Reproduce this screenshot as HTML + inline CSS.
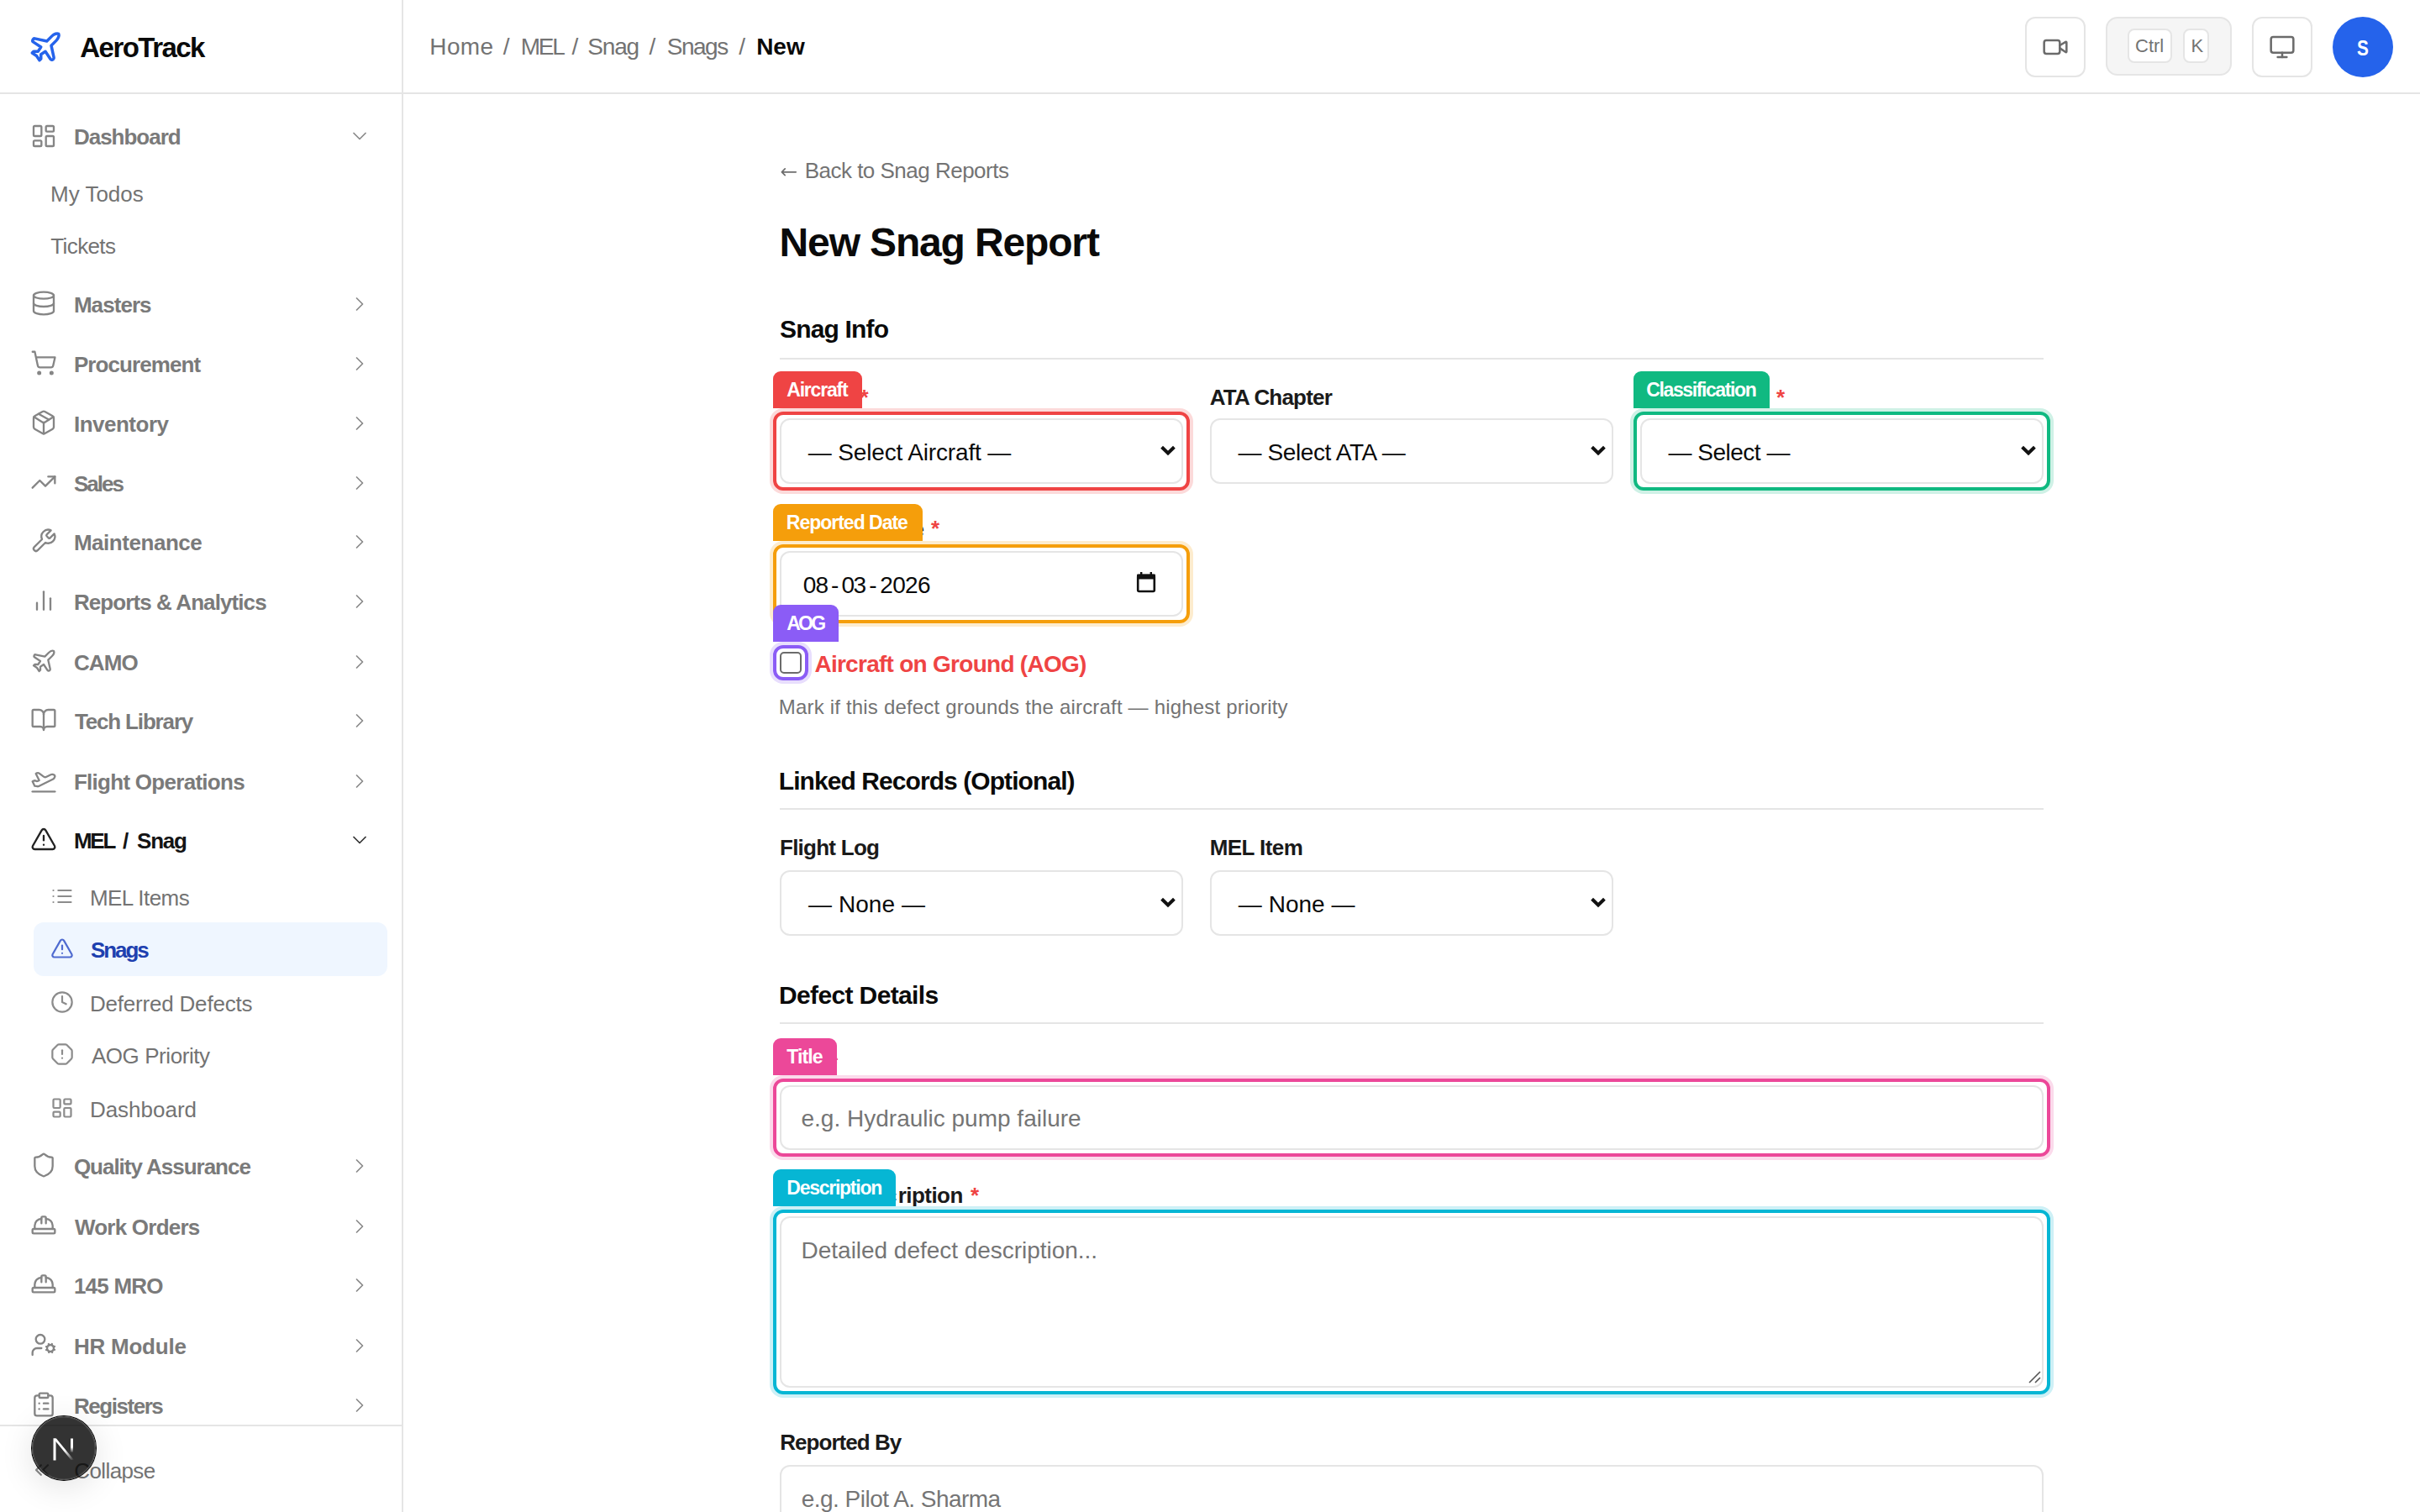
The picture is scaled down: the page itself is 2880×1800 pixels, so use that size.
<!DOCTYPE html>
<html><head><meta charset="utf-8"><title>AeroTrack</title>
<style>
html,body{margin:0;padding:0;}
body{width:2880px;height:1800px;position:relative;overflow:hidden;background:#fff;font-family:"Liberation Sans",sans-serif;}
.t{position:absolute;white-space:pre;}
.b{position:absolute;}
.ic{position:absolute;overflow:visible;}
@media (max-width: 2000px) { body{zoom:0.5;} }
</style></head><body>

<div class="b" style="left:0px;top:110px;width:2880px;height:2px;background:#e5e5e5"></div>
<div class="b" style="left:478px;top:0px;width:2px;height:1800px;background:#e5e5e5"></div>
<svg class="ic" style="left:33px;top:35px;width:42px;height:42px" viewBox="0 0 24 24" fill="none" stroke="#2563eb" stroke-width="2" stroke-linecap="round" stroke-linejoin="round"><path d="M17.8 19.2 16 11l3.5-3.5C21 6 21.5 4 21 3c-1-.5-3 0-4.5 1.5L13 8 4.8 6.2c-.5-.1-.9.1-1.1.5l-.3.5c-.2.5-.1 1 .3 1.3L9 12l-2 3H4l-1 1 3 2 2 3 1-1v-3l3-2 3.5 5.3c.3.4.8.5 1.3.3l.5-.2c.4-.3.6-.7.5-1.2z"/></svg>
<div class="t" style="left:95.30px;top:40px;font-size:33px;line-height:33px;font-weight:700;letter-spacing:-1.538px;color:#0a0a0a;">AeroTrack</div>
<div class="t" style="left:511.30px;top:42px;font-size:28px;line-height:28px;letter-spacing:0.367px;color:#737373;">Home</div>
<div class="t" style="left:598.80px;top:42px;font-size:28px;line-height:28px;color:#737373;">/</div>
<div class="t" style="left:619.80px;top:42px;font-size:28px;line-height:28px;letter-spacing:-2.250px;color:#737373;">MEL</div>
<div class="t" style="left:680.50px;top:42px;font-size:28px;line-height:28px;color:#737373;">/</div>
<div class="t" style="left:699.20px;top:42px;font-size:28px;line-height:28px;letter-spacing:-1.133px;color:#737373;">Snag</div>
<div class="t" style="left:772.60px;top:42px;font-size:28px;line-height:28px;color:#737373;">/</div>
<div class="t" style="left:793.80px;top:42px;font-size:28px;line-height:28px;letter-spacing:-1.500px;color:#737373;">Snags</div>
<div class="t" style="left:879.20px;top:42px;font-size:28px;line-height:28px;color:#737373;">/</div>
<div class="t" style="left:900.20px;top:42px;font-size:28px;line-height:28px;font-weight:700;letter-spacing:-0.050px;color:#0a0a0a;">New</div>
<div class="b" style="left:2410px;top:20px;width:72px;height:72px;border:2px solid #e5e5e5;border-radius:12px;box-sizing:border-box;background:#fff"></div>
<svg class="ic" style="left:2430px;top:40px;width:32px;height:32px" viewBox="0 0 24 24" fill="none" stroke="#6b6b6b" stroke-width="1.9" stroke-linecap="round" stroke-linejoin="round"><path d="m16 13 5.223 3.482a.5.5 0 0 0 .777-.416V7.87a.5.5 0 0 0-.752-.432L16 10.5"/><rect x="2" y="6" width="14" height="12" rx="2"/></svg>
<div class="b" style="left:2506px;top:20px;width:150px;height:70px;border:2px solid #e5e5e5;border-radius:14px;box-sizing:border-box;background:#f5f5f5"></div>
<div class="b" style="left:2532px;top:34px;width:53px;height:41px;border:2px solid #e5e5e5;border-radius:8px;box-sizing:border-box;background:#fff"></div>
<div class="b" style="left:2598px;top:34px;width:31px;height:41px;border:2px solid #e5e5e5;border-radius:8px;box-sizing:border-box;background:#fff"></div>
<div class="t" style="left:2541.00px;top:44px;font-size:22px;line-height:22px;color:#737373;">Ctrl</div>
<div class="t" style="left:2607.40px;top:44px;font-size:22px;line-height:22px;color:#737373;">K</div>
<div class="b" style="left:2680px;top:20px;width:72px;height:72px;border:2px solid #e5e5e5;border-radius:12px;box-sizing:border-box;background:#fff"></div>
<svg class="ic" style="left:2700px;top:40px;width:32px;height:32px" viewBox="0 0 24 24" fill="none" stroke="#6b6b6b" stroke-width="1.9" stroke-linecap="round" stroke-linejoin="round"><rect width="20" height="14" x="2" y="3" rx="2"/><line x1="8" x2="16" y1="21" y2="21"/><line x1="12" x2="12" y1="17" y2="21"/></svg>
<div class="b" style="left:2776px;top:20px;width:72px;height:72px;border-radius:50%;background:#2563eb"></div>
<div class="t" style="left:2805.20px;top:44px;font-size:26px;line-height:26px;font-weight:700;color:#fff;transform:scaleX(0.8);transform-origin:0 0;">S</div>
<svg class="ic" style="left:36px;top:146px;width:32px;height:32px" viewBox="0 0 24 24" fill="none" stroke="#858585" stroke-width="1.75" stroke-linecap="round" stroke-linejoin="round"><rect width="7" height="9" x="3" y="3" rx="1"/><rect width="7" height="5" x="14" y="3" rx="1"/><rect width="7" height="9" x="14" y="12" rx="1"/><rect width="7" height="5" x="3" y="16" rx="1"/></svg>
<div class="t" style="left:87.90px;top:150px;font-size:26px;line-height:26px;font-weight:700;letter-spacing:-1.000px;color:#7a7a7a;">Dashboard</div>
<svg class="ic" style="left:414px;top:148px;width:28px;height:28px" viewBox="0 0 24 24" fill="none" stroke="#8a8a8a" stroke-width="1.5" stroke-linecap="round" stroke-linejoin="round"><path d="m6 9 6 6 6-6"/></svg>
<svg class="ic" style="left:36px;top:344.5px;width:32px;height:32px" viewBox="0 0 24 24" fill="none" stroke="#858585" stroke-width="1.75" stroke-linecap="round" stroke-linejoin="round"><ellipse cx="12" cy="5" rx="9" ry="3"/><path d="M3 5V19A9 3 0 0 0 21 19V5"/><path d="M3 12A9 3 0 0 0 21 12"/></svg>
<div class="t" style="left:87.90px;top:350px;font-size:26px;line-height:26px;font-weight:700;letter-spacing:-0.933px;color:#7a7a7a;">Masters</div>
<svg class="ic" style="left:414px;top:348px;width:28px;height:28px" viewBox="0 0 24 24" fill="none" stroke="#8a8a8a" stroke-width="1.5" stroke-linecap="round" stroke-linejoin="round"><path d="m9 18 6-6-6-6"/></svg>
<svg class="ic" style="left:36px;top:415.5px;width:32px;height:32px" viewBox="0 0 24 24" fill="none" stroke="#858585" stroke-width="1.75" stroke-linecap="round" stroke-linejoin="round"><circle cx="8" cy="21" r="1"/><circle cx="19" cy="21" r="1"/><path d="M2.05 2.05h2l2.66 12.42a2 2 0 0 0 2 1.58h9.78a2 2 0 0 0 1.95-1.57l1.65-7.43H5.12"/></svg>
<div class="t" style="left:87.90px;top:421px;font-size:26px;line-height:26px;font-weight:700;letter-spacing:-0.920px;color:#7a7a7a;">Procurement</div>
<svg class="ic" style="left:414px;top:419px;width:28px;height:28px" viewBox="0 0 24 24" fill="none" stroke="#8a8a8a" stroke-width="1.5" stroke-linecap="round" stroke-linejoin="round"><path d="m9 18 6-6-6-6"/></svg>
<svg class="ic" style="left:36px;top:486.5px;width:32px;height:32px" viewBox="0 0 24 24" fill="none" stroke="#858585" stroke-width="1.75" stroke-linecap="round" stroke-linejoin="round"><path d="M11 21.73a2 2 0 0 0 2 0l7-4A2 2 0 0 0 21 16V8a2 2 0 0 0-1-1.73l-7-4a2 2 0 0 0-2 0l-7 4A2 2 0 0 0 3 8v8a2 2 0 0 0 1 1.73z"/><path d="M12 22V12"/><path d="m3.3 7 7.703 4.734a2 2 0 0 0 1.994 0L20.7 7"/><path d="m7.5 4.27 9 5.15"/></svg>
<div class="t" style="left:87.90px;top:492px;font-size:26px;line-height:26px;font-weight:700;letter-spacing:-0.488px;color:#7a7a7a;">Inventory</div>
<svg class="ic" style="left:414px;top:490px;width:28px;height:28px" viewBox="0 0 24 24" fill="none" stroke="#8a8a8a" stroke-width="1.5" stroke-linecap="round" stroke-linejoin="round"><path d="m9 18 6-6-6-6"/></svg>
<svg class="ic" style="left:36px;top:557.5px;width:32px;height:32px" viewBox="0 0 24 24" fill="none" stroke="#858585" stroke-width="1.75" stroke-linecap="round" stroke-linejoin="round"><polyline points="22 7 13.5 15.5 8.5 10.5 2 17"/><polyline points="16 7 22 7 22 13"/></svg>
<div class="t" style="left:87.90px;top:563px;font-size:26px;line-height:26px;font-weight:700;letter-spacing:-1.975px;color:#7a7a7a;">Sales</div>
<svg class="ic" style="left:414px;top:561px;width:28px;height:28px" viewBox="0 0 24 24" fill="none" stroke="#8a8a8a" stroke-width="1.5" stroke-linecap="round" stroke-linejoin="round"><path d="m9 18 6-6-6-6"/></svg>
<svg class="ic" style="left:36px;top:627.5px;width:32px;height:32px" viewBox="0 0 24 24" fill="none" stroke="#858585" stroke-width="1.75" stroke-linecap="round" stroke-linejoin="round"><path d="M14.7 6.3a1 1 0 0 0 0 1.4l1.6 1.6a1 1 0 0 0 1.4 0l3.77-3.77a6 6 0 0 1-7.94 7.94l-6.91 6.91a2.12 2.12 0 0 1-3-3l6.91-6.91a6 6 0 0 1 7.94-7.94l-3.76 3.76z"/></svg>
<div class="t" style="left:87.90px;top:633px;font-size:26px;line-height:26px;font-weight:700;letter-spacing:-0.460px;color:#7a7a7a;">Maintenance</div>
<svg class="ic" style="left:414px;top:631px;width:28px;height:28px" viewBox="0 0 24 24" fill="none" stroke="#8a8a8a" stroke-width="1.5" stroke-linecap="round" stroke-linejoin="round"><path d="m9 18 6-6-6-6"/></svg>
<svg class="ic" style="left:36px;top:698.5px;width:32px;height:32px" viewBox="0 0 24 24" fill="none" stroke="#858585" stroke-width="1.75" stroke-linecap="round" stroke-linejoin="round"><line x1="18" x2="18" y1="20" y2="10"/><line x1="12" x2="12" y1="20" y2="4"/><line x1="6" x2="6" y1="20" y2="14"/></svg>
<div class="t" style="left:87.90px;top:704px;font-size:26px;line-height:26px;font-weight:700;letter-spacing:-0.911px;color:#7a7a7a;">Reports &amp; Analytics</div>
<svg class="ic" style="left:414px;top:702px;width:28px;height:28px" viewBox="0 0 24 24" fill="none" stroke="#8a8a8a" stroke-width="1.5" stroke-linecap="round" stroke-linejoin="round"><path d="m9 18 6-6-6-6"/></svg>
<svg class="ic" style="left:36px;top:770.5px;width:32px;height:32px" viewBox="0 0 24 24" fill="none" stroke="#858585" stroke-width="1.75" stroke-linecap="round" stroke-linejoin="round"><path d="M17.8 19.2 16 11l3.5-3.5C21 6 21.5 4 21 3c-1-.5-3 0-4.5 1.5L13 8 4.8 6.2c-.5-.1-.9.1-1.1.5l-.3.5c-.2.5-.1 1 .3 1.3L9 12l-2 3H4l-1 1 3 2 2 3 1-1v-3l3-2 3.5 5.3c.3.4.8.5 1.3.3l.5-.2c.4-.3.6-.7.5-1.2z"/></svg>
<div class="t" style="left:87.90px;top:776px;font-size:26px;line-height:26px;font-weight:700;letter-spacing:-0.833px;color:#7a7a7a;">CAMO</div>
<svg class="ic" style="left:414px;top:774px;width:28px;height:28px" viewBox="0 0 24 24" fill="none" stroke="#8a8a8a" stroke-width="1.5" stroke-linecap="round" stroke-linejoin="round"><path d="m9 18 6-6-6-6"/></svg>
<svg class="ic" style="left:36px;top:840.5px;width:32px;height:32px" viewBox="0 0 24 24" fill="none" stroke="#858585" stroke-width="1.75" stroke-linecap="round" stroke-linejoin="round"><path d="M12 7v14"/><path d="M3 18a1 1 0 0 1-1-1V4a1 1 0 0 1 1-1h5a4 4 0 0 1 4 4 4 4 0 0 1 4-4h5a1 1 0 0 1 1 1v13a1 1 0 0 1-1 1h-6a3 3 0 0 0-3 3 3 3 0 0 0-3-3z"/></svg>
<div class="t" style="left:88.90px;top:846px;font-size:26px;line-height:26px;font-weight:700;letter-spacing:-1.155px;color:#7a7a7a;">Tech Library</div>
<svg class="ic" style="left:414px;top:844px;width:28px;height:28px" viewBox="0 0 24 24" fill="none" stroke="#8a8a8a" stroke-width="1.5" stroke-linecap="round" stroke-linejoin="round"><path d="m9 18 6-6-6-6"/></svg>
<svg class="ic" style="left:36px;top:912.5px;width:32px;height:32px" viewBox="0 0 24 24" fill="none" stroke="#858585" stroke-width="1.75" stroke-linecap="round" stroke-linejoin="round"><path d="M2 22h20"/><path d="M6.36 17.4 4 17l-2-4 1.1-.55a2 2 0 0 1 1.8 0l.17.1a2 2 0 0 0 1.8 0L8 12 5 6l.9-.45a2 2 0 0 1 2.09.2l4.02 3a2 2 0 0 0 2.1.2l4.19-2.06a2.41 2.41 0 0 1 1.73-.17L21 7a1.4 1.4 0 0 1 .87 1.99l-.38.76c-.23.46-.6.84-1.07 1.08L7.58 17.2a2 2 0 0 1-1.22.18Z"/></svg>
<div class="t" style="left:87.90px;top:918px;font-size:26px;line-height:26px;font-weight:700;letter-spacing:-0.719px;color:#7a7a7a;">Flight Operations</div>
<svg class="ic" style="left:414px;top:916px;width:28px;height:28px" viewBox="0 0 24 24" fill="none" stroke="#8a8a8a" stroke-width="1.5" stroke-linecap="round" stroke-linejoin="round"><path d="m9 18 6-6-6-6"/></svg>
<svg class="ic" style="left:36px;top:982.5px;width:32px;height:32px" viewBox="0 0 24 24" fill="none" stroke="#222" stroke-width="1.75" stroke-linecap="round" stroke-linejoin="round"><path d="m21.73 18-8-14a2 2 0 0 0-3.48 0l-8 14A2 2 0 0 0 4 21h16a2 2 0 0 0 1.73-3"/><path d="M12 9v4"/><path d="M12 17h.01"/></svg>
<div class="t" style="left:87.90px;top:988px;font-size:26px;line-height:26px;font-weight:700;letter-spacing:-2.200px;color:#141414;">MEL</div>
<div class="t" style="left:146.00px;top:988px;font-size:26px;line-height:26px;font-weight:700;color:#141414;">/</div>
<div class="t" style="left:163.10px;top:988px;font-size:26px;line-height:26px;font-weight:700;letter-spacing:-1.267px;color:#141414;">Snag</div>
<svg class="ic" style="left:414px;top:986px;width:28px;height:28px" viewBox="0 0 24 24" fill="none" stroke="#333" stroke-width="1.5" stroke-linecap="round" stroke-linejoin="round"><path d="m6 9 6 6 6-6"/></svg>
<svg class="ic" style="left:36px;top:1370.5px;width:32px;height:32px" viewBox="0 0 24 24" fill="none" stroke="#858585" stroke-width="1.75" stroke-linecap="round" stroke-linejoin="round"><path d="M20 13c0 5-3.5 7.5-7.66 8.950a1 1 0 0 1-.67-.01C7.5 20.5 4 18 4 13V6a1 1 0 0 1 1-1c2 0 4.5-1.2 6.24-2.72a1.17 1.170 0 0 1 1.52 0C14.51 3.81 17 5 19 5a1 1 0 0 1 1 1z"/></svg>
<div class="t" style="left:87.90px;top:1376px;font-size:26px;line-height:26px;font-weight:700;letter-spacing:-1.025px;color:#7a7a7a;">Quality Assurance</div>
<svg class="ic" style="left:414px;top:1374px;width:28px;height:28px" viewBox="0 0 24 24" fill="none" stroke="#8a8a8a" stroke-width="1.5" stroke-linecap="round" stroke-linejoin="round"><path d="m9 18 6-6-6-6"/></svg>
<svg class="ic" style="left:36px;top:1442.5px;width:32px;height:32px" viewBox="0 0 24 24" fill="none" stroke="#858585" stroke-width="1.75" stroke-linecap="round" stroke-linejoin="round"><path d="M10 10V5a1 1 0 0 1 1-1h2a1 1 0 0 1 1 1v5"/><path d="M14 6a6 6 0 0 1 6 6v3"/><path d="M4 15v-3a6 6 0 0 1 6-6"/><rect x="2" y="15" width="20" height="4" rx="1"/></svg>
<div class="t" style="left:88.90px;top:1448px;font-size:26px;line-height:26px;font-weight:700;letter-spacing:-0.760px;color:#7a7a7a;">Work Orders</div>
<svg class="ic" style="left:414px;top:1446px;width:28px;height:28px" viewBox="0 0 24 24" fill="none" stroke="#8a8a8a" stroke-width="1.5" stroke-linecap="round" stroke-linejoin="round"><path d="m9 18 6-6-6-6"/></svg>
<svg class="ic" style="left:36px;top:1512.5px;width:32px;height:32px" viewBox="0 0 24 24" fill="none" stroke="#858585" stroke-width="1.75" stroke-linecap="round" stroke-linejoin="round"><path d="M10 10V5a1 1 0 0 1 1-1h2a1 1 0 0 1 1 1v5"/><path d="M14 6a6 6 0 0 1 6 6v3"/><path d="M4 15v-3a6 6 0 0 1 6-6"/><rect x="2" y="15" width="20" height="4" rx="1"/></svg>
<div class="t" style="left:87.90px;top:1518px;font-size:26px;line-height:26px;font-weight:700;letter-spacing:-0.767px;color:#7a7a7a;">145 MRO</div>
<svg class="ic" style="left:414px;top:1516px;width:28px;height:28px" viewBox="0 0 24 24" fill="none" stroke="#8a8a8a" stroke-width="1.5" stroke-linecap="round" stroke-linejoin="round"><path d="m9 18 6-6-6-6"/></svg>
<svg class="ic" style="left:36px;top:1584.5px;width:32px;height:32px" viewBox="0 0 24 24" fill="none" stroke="#858585" stroke-width="1.75" stroke-linecap="round" stroke-linejoin="round"><circle cx="18" cy="15" r="3"/><circle cx="9" cy="7" r="4"/><path d="M10 15H6a4 4 0 0 0-4 4v2"/><path d="m21.7 16.4-.9-.3"/><path d="m15.2 13.9-.9-.3"/><path d="m16.6 18.7.3-.9"/><path d="m19.1 12.2.3-.9"/><path d="m19.6 18.7-.4-1"/><path d="m16.8 12.3-.4-1"/><path d="m14.3 16.6 1-.4"/><path d="m20.7 13.8 1-.4"/></svg>
<div class="t" style="left:87.90px;top:1590px;font-size:26px;line-height:26px;font-weight:700;letter-spacing:-0.225px;color:#7a7a7a;">HR Module</div>
<svg class="ic" style="left:414px;top:1588px;width:28px;height:28px" viewBox="0 0 24 24" fill="none" stroke="#8a8a8a" stroke-width="1.5" stroke-linecap="round" stroke-linejoin="round"><path d="m9 18 6-6-6-6"/></svg>
<svg class="ic" style="left:36px;top:1655.5px;width:32px;height:32px" viewBox="0 0 24 24" fill="none" stroke="#858585" stroke-width="1.75" stroke-linecap="round" stroke-linejoin="round"><rect width="8" height="4" x="8" y="2" rx="1" ry="1"/><path d="M16 4h2a2 2 0 0 1 2 2v14a2 2 0 0 1-2 2H6a2 2 0 0 1-2-2V6a2 2 0 0 1 2-2h2"/><path d="M12 11h4"/><path d="M12 16h4"/><path d="M8 11h.01"/><path d="M8 16h.01"/></svg>
<div class="t" style="left:87.90px;top:1661px;font-size:26px;line-height:26px;font-weight:700;letter-spacing:-1.450px;color:#7a7a7a;">Registers</div>
<svg class="ic" style="left:414px;top:1659px;width:28px;height:28px" viewBox="0 0 24 24" fill="none" stroke="#8a8a8a" stroke-width="1.5" stroke-linecap="round" stroke-linejoin="round"><path d="m9 18 6-6-6-6"/></svg>
<div class="t" style="left:60.00px;top:218px;font-size:26px;line-height:26px;color:#737373;">My Todos</div>
<div class="t" style="left:60.30px;top:280px;font-size:26px;line-height:26px;letter-spacing:-0.617px;color:#737373;">Tickets</div>
<div class="b" style="left:40px;top:1098px;width:421px;height:64px;background:#eff6ff;border-radius:12px"></div>
<svg class="ic" style="left:60px;top:1053px;width:28px;height:28px" viewBox="0 0 24 24" fill="none" stroke="#8c8c8c" stroke-width="1.9" stroke-linecap="round" stroke-linejoin="round"><path d="M3 12h.01"/><path d="M3 18h.01"/><path d="M3 6h.01"/><path d="M8 12h13"/><path d="M8 18h13"/><path d="M8 6h13"/></svg>
<div class="t" style="left:106.90px;top:1056px;font-size:26px;line-height:26px;letter-spacing:-0.562px;color:#737373;">MEL Items</div>
<svg class="ic" style="left:60px;top:1115px;width:28px;height:28px" viewBox="0 0 24 24" fill="none" stroke="#4f6bd0" stroke-width="1.9" stroke-linecap="round" stroke-linejoin="round"><path d="m21.73 18-8-14a2 2 0 0 0-3.48 0l-8 14A2 2 0 0 0 4 21h16a2 2 0 0 0 1.73-3"/><path d="M12 9v4"/><path d="M12 17h.01"/></svg>
<div class="t" style="left:107.90px;top:1118px;font-size:26px;line-height:26px;font-weight:700;letter-spacing:-2.025px;color:#1e40af;">Snags</div>
<svg class="ic" style="left:60px;top:1179px;width:28px;height:28px" viewBox="0 0 24 24" fill="none" stroke="#8c8c8c" stroke-width="1.9" stroke-linecap="round" stroke-linejoin="round"><circle cx="12" cy="12" r="10"/><polyline points="12 6 12 12 16 14"/></svg>
<div class="t" style="left:106.90px;top:1182px;font-size:26px;line-height:26px;letter-spacing:-0.193px;color:#737373;">Deferred Defects</div>
<svg class="ic" style="left:60px;top:1241px;width:28px;height:28px" viewBox="0 0 24 24" fill="none" stroke="#8c8c8c" stroke-width="1.9" stroke-linecap="round" stroke-linejoin="round"><path d="M12 16h.01"/><path d="M12 8v4"/><path d="M15.312 2a2 2 0 0 1 1.414.586l4.688 4.688A2 2 0 0 1 22 8.688v6.624a2 2 0 0 1-.586 1.414l-4.688 4.688a2 2 0 0 1-1.414.586H8.688a2 2 0 0 1-1.414-.586l-4.688-4.688A2 2 0 0 1 2 15.312V8.688a2 2 0 0 1 .586-1.414l4.688-4.688A2 2 0 0 1 8.688 2z"/></svg>
<div class="t" style="left:108.90px;top:1244px;font-size:26px;line-height:26px;letter-spacing:-0.427px;color:#737373;">AOG Priority</div>
<svg class="ic" style="left:60px;top:1305px;width:28px;height:28px" viewBox="0 0 24 24" fill="none" stroke="#8c8c8c" stroke-width="1.9" stroke-linecap="round" stroke-linejoin="round"><rect width="7" height="9" x="3" y="3" rx="1"/><rect width="7" height="5" x="14" y="3" rx="1"/><rect width="7" height="9" x="14" y="12" rx="1"/><rect width="7" height="5" x="3" y="16" rx="1"/></svg>
<div class="t" style="left:106.90px;top:1308px;font-size:26px;line-height:26px;letter-spacing:-0.012px;color:#737373;">Dashboard</div>
<div class="b" style="left:0px;top:1696px;width:478px;height:2px;background:#e5e5e5"></div>
<svg class="ic" style="left:36px;top:1736px;width:28px;height:28px" viewBox="0 0 24 24" fill="none" stroke="#8a8a8a" stroke-width="1.9" stroke-linecap="round" stroke-linejoin="round"><path d="m11 17-5-5 5-5"/><path d="m18 17-5-5 5-5"/></svg>
<div class="t" style="left:88.30px;top:1738px;font-size:26px;line-height:26px;letter-spacing:-0.614px;color:#737373;">Collapse</div>
<div class="b" style="left:38px;top:1686px;width:76px;height:76px;border-radius:50%;background:rgba(0,0,0,0.8);box-shadow:0 0 0 1px #000, inset 0 0 0 1.5px rgba(255,255,255,0.12), 0 8px 40px rgba(0,0,0,0.12)"></div>
<svg class="ic" style="left:62px;top:1711px;width:28px;height:29px" viewBox="0 0 28 29"><defs><linearGradient id="ng" x1="0" y1="0" x2="0" y2="1"><stop offset="0" stop-color="#fff"/><stop offset="0.6" stop-color="#fff"/><stop offset="1" stop-color="#fff" stop-opacity="0"/></linearGradient><linearGradient id="ng2" x1="0" y1="0" x2="1" y2="1"><stop offset="0.55" stop-color="#fff"/><stop offset="1" stop-color="#fff" stop-opacity="0"/></linearGradient></defs><rect x="1.5" y="1.5" width="3" height="26" fill="#fff"/><path d="M1.5 1.5 L5 1.5 L26 27 L22.5 27 Z" fill="url(#ng2)"/><rect x="22" y="1.5" width="3" height="17" fill="url(#ng)"/></svg>
<svg class="ic" style="left:926px;top:196px;width:26px;height:18px" viewBox="0 0 26 18"><path d="M4.6 8.8 H21.2 M8.2 4.9 L4.4 8.8 L8.2 12.7" fill="none" stroke="#6e6e6e" stroke-width="1.7" stroke-linecap="round" stroke-linejoin="round"/></svg>
<div class="t" style="left:957.70px;top:190px;font-size:26px;line-height:26px;letter-spacing:-0.511px;color:#737373;">Back to Snag Reports</div>
<div class="t" style="left:927.60px;top:265px;font-size:48px;line-height:48px;font-weight:700;letter-spacing:-1.150px;color:#0a0a0a;">New Snag Report</div>
<div class="t" style="left:928.00px;top:377px;font-size:30px;line-height:30px;font-weight:700;letter-spacing:-0.825px;color:#0a0a0a;">Snag Info</div>
<div class="b" style="left:928px;top:426px;width:1504px;height:2px;background:#e5e5e5"></div>
<div class="t" style="left:928.00px;top:460px;font-size:26px;line-height:26px;font-weight:700;letter-spacing:-0.571px;color:#1a1a1a;">Aircraft</div>
<div class="t" style="left:1023.50px;top:460px;font-size:26px;line-height:26px;font-weight:700;color:#ef4444;">*</div>
<div class="t" style="left:1439.80px;top:460px;font-size:26px;line-height:26px;font-weight:700;letter-spacing:-0.810px;color:#1a1a1a;">ATA Chapter</div>
<div class="t" style="left:1952.00px;top:460px;font-size:26px;line-height:26px;font-weight:700;letter-spacing:-1.154px;color:#1a1a1a;">Classification</div>
<div class="t" style="left:2114.00px;top:460px;font-size:26px;line-height:26px;font-weight:700;color:#ef4444;">*</div>
<div class="b" style="left:928px;top:498px;width:480px;height:78px;border:2px solid #e5e5e5;border-radius:12px;box-sizing:border-box;background:#fff"></div>
<div class="t" style="left:961.80px;top:525px;font-size:28px;line-height:28px;letter-spacing:-0.156px;color:#0a0a0a;">— Select Aircraft —</div>
<svg class="ic" style="left:1380px;top:529px;width:20px;height:14px" viewBox="0 0 20 14"><path d="M2.6 3.2 L10 10.4 L17.4 3.2" fill="none" stroke="#111" stroke-width="4" stroke-linecap="butt"/></svg>
<div class="b" style="left:1440px;top:498px;width:480px;height:78px;border:2px solid #e5e5e5;border-radius:12px;box-sizing:border-box;background:#fff"></div>
<div class="t" style="left:1473.60px;top:525px;font-size:28px;line-height:28px;letter-spacing:-0.408px;color:#0a0a0a;">— Select ATA —</div>
<svg class="ic" style="left:1892px;top:529px;width:20px;height:14px" viewBox="0 0 20 14"><path d="M2.6 3.2 L10 10.4 L17.4 3.2" fill="none" stroke="#111" stroke-width="4" stroke-linecap="butt"/></svg>
<div class="b" style="left:1952px;top:498px;width:480px;height:78px;border:2px solid #e5e5e5;border-radius:12px;box-sizing:border-box;background:#fff"></div>
<div class="t" style="left:1985.50px;top:525px;font-size:28px;line-height:28px;letter-spacing:-0.500px;color:#0a0a0a;">— Select —</div>
<svg class="ic" style="left:2404px;top:529px;width:20px;height:14px" viewBox="0 0 20 14"><path d="M2.6 3.2 L10 10.4 L17.4 3.2" fill="none" stroke="#111" stroke-width="4" stroke-linecap="butt"/></svg>
<div class="t" style="left:928.00px;top:617px;font-size:26px;line-height:26px;font-weight:700;letter-spacing:-0.727px;color:#1a1a1a;">Reported Dat</div>
<div class="t" style="left:1085.50px;top:617px;font-size:26px;line-height:26px;font-weight:700;color:#1a1a1a;">e</div>
<div class="t" style="left:1108.00px;top:615.6px;font-size:26px;line-height:26px;font-weight:700;color:#ef4444;">*</div>
<div class="b" style="left:928px;top:656px;width:480px;height:78px;border:2px solid #e5e5e5;border-radius:12px;box-sizing:border-box;background:#fff"></div>
<div class="t" style="left:955.70px;top:683px;font-size:28px;line-height:28px;letter-spacing:-0.700px;color:#0a0a0a;">08</div>
<div class="t" style="left:989.00px;top:683px;font-size:28px;line-height:28px;color:#0a0a0a;">-</div>
<div class="t" style="left:1001.50px;top:683px;font-size:28px;line-height:28px;letter-spacing:-1.500px;color:#0a0a0a;">03</div>
<div class="t" style="left:1034.20px;top:683px;font-size:28px;line-height:28px;color:#0a0a0a;">-</div>
<div class="t" style="left:1047.30px;top:683px;font-size:28px;line-height:28px;letter-spacing:-0.667px;color:#0a0a0a;">2026</div>
<svg class="ic" style="left:1352px;top:680px;width:24px;height:26px" viewBox="0 0 24 26"><rect x="2.2" y="5" width="19.6" height="19" rx="1.5" fill="none" stroke="#111" stroke-width="2.6"/><rect x="1" y="3.5" width="22" height="6" rx="1" fill="#111"/><rect x="5" y="1" width="2.4" height="4" fill="#111"/><rect x="16.6" y="1" width="2.4" height="4" fill="#111"/></svg>
<div class="b" style="left:928px;top:776px;width:26px;height:26px;border:2px solid #6b6b6b;border-radius:5px;box-sizing:border-box;background:#fff"></div>
<div class="t" style="left:969.40px;top:777px;font-size:28px;line-height:28px;font-weight:700;letter-spacing:-0.726px;color:#ef4444;">Aircraft on Ground (AOG)</div>
<div class="t" style="left:926.80px;top:830px;font-size:24px;line-height:24px;letter-spacing:0.186px;color:#737373;">Mark if this defect grounds the aircraft — highest priority</div>
<div class="t" style="left:926.80px;top:915px;font-size:30px;line-height:30px;font-weight:700;letter-spacing:-0.929px;color:#0a0a0a;">Linked Records (Optional)</div>
<div class="b" style="left:928px;top:962px;width:1504px;height:2px;background:#e5e5e5"></div>
<div class="t" style="left:928.00px;top:996px;font-size:26px;line-height:26px;font-weight:700;letter-spacing:-0.744px;color:#1a1a1a;">Flight Log</div>
<div class="t" style="left:1439.70px;top:996px;font-size:26px;line-height:26px;font-weight:700;letter-spacing:-0.571px;color:#1a1a1a;">MEL Item</div>
<div class="b" style="left:928px;top:1036px;width:480px;height:78px;border:2px solid #e5e5e5;border-radius:12px;box-sizing:border-box;background:#fff"></div>
<div class="t" style="left:962.00px;top:1063px;font-size:28px;line-height:28px;letter-spacing:0.071px;color:#0a0a0a;">— None —</div>
<svg class="ic" style="left:1380px;top:1067px;width:20px;height:14px" viewBox="0 0 20 14"><path d="M2.6 3.2 L10 10.4 L17.4 3.2" fill="none" stroke="#111" stroke-width="4" stroke-linecap="butt"/></svg>
<div class="b" style="left:1440px;top:1036px;width:480px;height:78px;border:2px solid #e5e5e5;border-radius:12px;box-sizing:border-box;background:#fff"></div>
<div class="t" style="left:1473.80px;top:1063px;font-size:28px;line-height:28px;letter-spacing:0.029px;color:#0a0a0a;">— None —</div>
<svg class="ic" style="left:1892px;top:1067px;width:20px;height:14px" viewBox="0 0 20 14"><path d="M2.6 3.2 L10 10.4 L17.4 3.2" fill="none" stroke="#111" stroke-width="4" stroke-linecap="butt"/></svg>
<div class="t" style="left:927.00px;top:1170px;font-size:30px;line-height:30px;font-weight:700;letter-spacing:-0.631px;color:#0a0a0a;">Defect Details</div>
<div class="b" style="left:928px;top:1217px;width:1504px;height:2px;background:#e5e5e5"></div>
<div class="t" style="left:929.00px;top:1254px;font-size:26px;line-height:26px;font-weight:700;letter-spacing:0.500px;color:#1a1a1a;">Title</div>
<div class="t" style="left:987.00px;top:1253px;font-size:26px;line-height:26px;font-weight:700;color:#ef4444;">*</div>
<div class="b" style="left:928px;top:1292px;width:1504px;height:77px;border:2px solid #e5e5e5;border-radius:12px;box-sizing:border-box;background:#fff"></div>
<div class="t" style="left:953.50px;top:1318px;font-size:28px;line-height:28px;letter-spacing:0.004px;color:#757575;">e.g. Hydraulic pump failure</div>
<div class="t" style="left:1053.00px;top:1410px;font-size:26px;line-height:26px;font-weight:700;color:#1a1a1a;">c</div>
<div class="t" style="left:1068.80px;top:1410px;font-size:26px;line-height:26px;font-weight:700;letter-spacing:-0.567px;color:#1a1a1a;">ription</div>
<div class="t" style="left:1155.00px;top:1410px;font-size:26px;line-height:26px;font-weight:700;color:#ef4444;">*</div>
<div class="b" style="left:928px;top:1448px;width:1504px;height:204px;border:2px solid #e5e5e5;border-radius:12px;box-sizing:border-box;background:#fff"></div>
<div class="t" style="left:953.60px;top:1475px;font-size:28px;line-height:28px;letter-spacing:-0.028px;color:#757575;">Detailed defect description...</div>
<svg class="ic" style="left:2412px;top:1630px;width:18px;height:18px" viewBox="0 0 18 18"><path d="M3 16 L16 3 M10 16 L16 10" stroke="#555" stroke-width="1.6"/></svg>
<div class="t" style="left:928.30px;top:1704px;font-size:26px;line-height:26px;font-weight:700;letter-spacing:-0.970px;color:#1a1a1a;">Reported By</div>
<div class="b" style="left:928px;top:1744px;width:1504px;height:120px;border:2px solid #e5e5e5;border-radius:12px;box-sizing:border-box;background:#fff"></div>
<div class="t" style="left:953.80px;top:1771px;font-size:28px;line-height:28px;letter-spacing:-0.532px;color:#757575;">e.g. Pilot A. Sharma</div>
<div class="b" style="left:920px;top:490px;width:496px;height:94px;box-sizing:border-box;border:4px solid #ef4444;border-radius:12px;box-shadow:0 0 0 4px #fcdada"></div>
<div class="b" style="left:1944px;top:490px;width:496px;height:94px;box-sizing:border-box;border:4px solid #10b981;border-radius:12px;box-shadow:0 0 0 4px #cff1e6"></div>
<div class="b" style="left:920px;top:648px;width:496px;height:94px;box-sizing:border-box;border:4px solid #f59e0b;border-radius:12px;box-shadow:0 0 0 4px #fdecce"></div>
<div class="b" style="left:920px;top:768px;width:42px;height:42px;box-sizing:border-box;border:4px solid #8b5cf6;border-radius:12px;box-shadow:0 0 0 4px #e8defd"></div>
<div class="b" style="left:920px;top:1284px;width:1520px;height:93px;box-sizing:border-box;border:4px solid #ec4899;border-radius:12px;box-shadow:0 0 0 4px #fbdaeb"></div>
<div class="b" style="left:920px;top:1440px;width:1520px;height:220px;box-sizing:border-box;border:4px solid #06b6d4;border-radius:12px;box-shadow:0 0 0 4px #cdf0f6"></div>
<div class="b" style="left:920px;top:442px;width:106px;height:44px;background:#ef4444;border-radius:9px 9px 0 0"></div><div class="t" style="left:936.30px;top:453px;font-size:23px;line-height:23px;font-weight:700;letter-spacing:-1.214px;color:#fff;">Aircraft</div>
<div class="b" style="left:1944px;top:442px;width:162px;height:44px;background:#10b981;border-radius:9px 9px 0 0"></div><div class="t" style="left:1959.30px;top:453px;font-size:23px;line-height:23px;font-weight:700;letter-spacing:-1.392px;color:#fff;">Classification</div>
<div class="b" style="left:920px;top:600px;width:178px;height:44px;background:#f59e0b;border-radius:9px 9px 0 0"></div><div class="t" style="left:935.80px;top:611px;font-size:23px;line-height:23px;font-weight:700;letter-spacing:-1.008px;color:#fff;">Reported Date</div>
<div class="b" style="left:920px;top:720px;width:78px;height:44px;background:#8b5cf6;border-radius:9px 9px 0 0"></div><div class="t" style="left:936.25px;top:731px;font-size:23px;line-height:23px;font-weight:700;letter-spacing:-2.775px;color:#fff;">AOG</div>
<div class="b" style="left:920px;top:1236px;width:76px;height:44px;background:#ec4899;border-radius:9px 9px 0 0"></div><div class="t" style="left:936.30px;top:1247px;font-size:23px;line-height:23px;font-weight:700;letter-spacing:-0.875px;color:#fff;">Title</div>
<div class="b" style="left:920px;top:1392px;width:146px;height:44px;background:#06b6d4;border-radius:9px 9px 0 0"></div><div class="t" style="left:936.30px;top:1403px;font-size:23px;line-height:23px;font-weight:700;letter-spacing:-1.260px;color:#fff;">Description</div>
</body></html>
